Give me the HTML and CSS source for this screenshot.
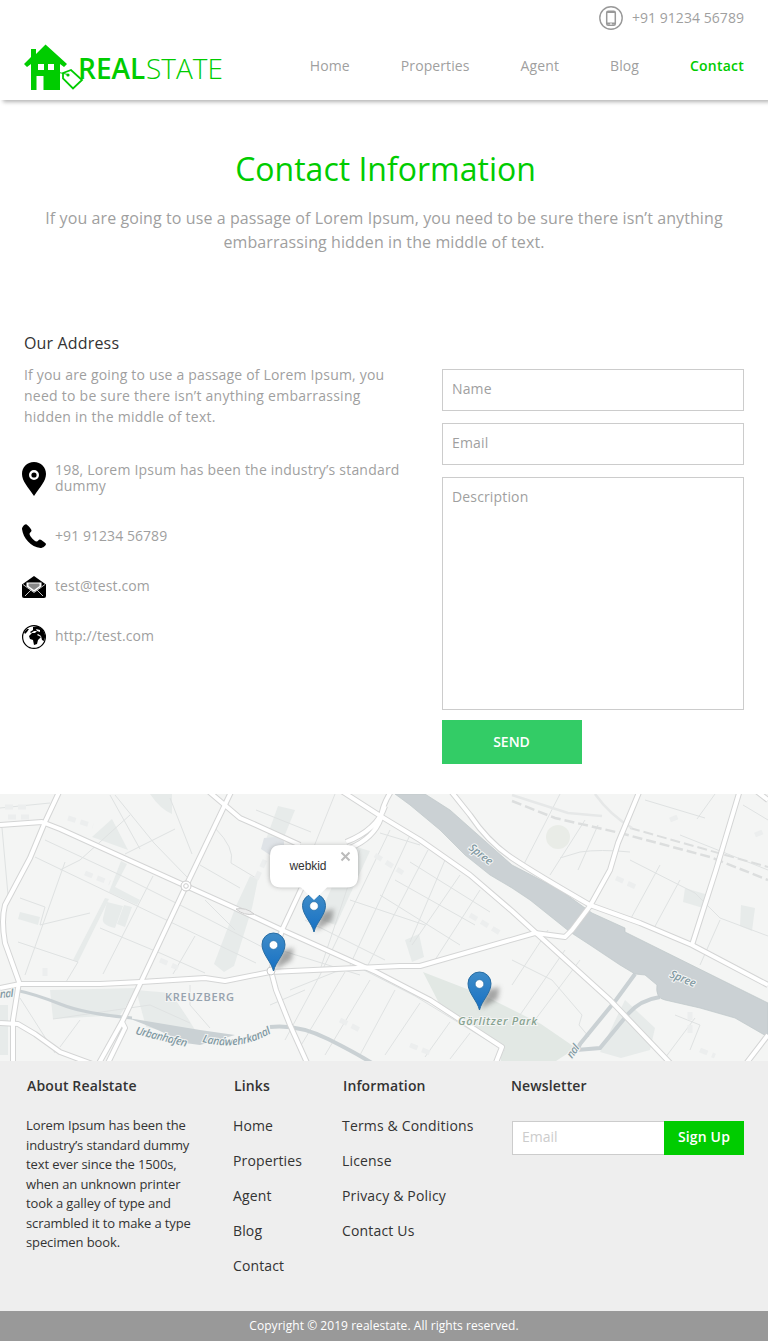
FILE: index.html
```html
<!DOCTYPE html>
<html lang="en">
<head>
<meta charset="utf-8">
<title>Contact - Realstate</title>
<link rel="stylesheet" href="styles.css">
</head>
<body>
<header class="header">
  <div class="topbar">
    <svg class="phone-icon" viewBox="0 0 24 24"><circle cx="12" cy="12" r="11.2" fill="none" stroke="#999" stroke-width="1.4"/><rect x="7.7" y="5.2" width="8.6" height="14" rx="1.5" fill="none" stroke="#999" stroke-width="1.5"/><path d="M8 6h8M8 17.5h8" stroke="#999" stroke-width="2"/><path d="M11 18h2" stroke="#fff"/></svg>
    <span class="phone">+91 91234 56789</span>
  </div>
  <div class="navbar">
    <a class="logo">
      <svg class="logo-icon" viewBox="0 0 60 48"><path fill="#0c0" fill-rule="evenodd" d="M7 5h5v5L21.500 .5 43 20l-3 3-4-3v26H19.500V32H12.500v14H7V20l-4 3-3-3 7-7zM14 20v6h6v-6zM24 20v6h6v-6z"/><path d="M39 29l8-3 11 10-9 8.500-10-10z" fill="#fff" stroke="#0c0" stroke-width="1.800"/><path d="M35 28.500l9 2" stroke="#0c0" fill="none"/><circle cx="44" cy="31" r="1.600" fill="#0c0"/></svg>
      <span class="logo-real">REAL</span><span class="logo-state">STATE</span>
    </a>
    <nav class="nav"><a>Home</a><a>Properties</a><a>Agent</a><a>Blog</a><a class="active">Contact</a></nav>
  </div>
</header>

<section class="intro">
  <h1>Contact Information</h1>
  <p>If you are going to use a passage of Lorem Ipsum, you need to be sure there isn’t anything<br>embarrassing hidden in the middle of text.</p>
</section>

<main class="contact">
  <section class="address">
    <h2>Our Address</h2>
    <p class="lead">If you are going to use a passage of Lorem Ipsum, you<br><span class="wide">need to be sure there isn’t anything embarrassing</span><br><span class="wide">hidden in the middle of text.</span></p>
    <ul class="details">
      <li class="place"><svg viewBox="0 0 24 34" height="34"><path fill-rule="evenodd" d="M12 0C5 0 0 5 0 12c0 7 6 13 12 22 6-9 12-15 12-22C24 5 19 0 12 0zm0 8a5 5 0 1 1 0 10 5 5 0 0 1 0-10z"/><circle cx="12" cy="13" r="2.600"/></svg><span>198, Lorem Ipsum has been the industry’s standard<br>dummy</span></li>
      <li><svg viewBox="0 0 24 24" height="24"><path d="M4 .2C2.500 0 0 3 0 5c1 9 9 18 18.500 19 2.500 0 5.500-2.500 5.500-4 0-1-5-4.500-6-4.500-1.500 0-2 2-3.500 2C12 17 8 12.500 7.500 10c0-1.500 2-2 2-3.500C9.500 5 5.500.5 4 .2z"/></svg><span class="tel">+91 91234 56789</span></li>
      <li><svg viewBox="0 0 24 24" height="24"><g transform="translate(0 1)"><path d="M0 9.500L12 1l12 8.500V21q0 2-2 2H2q-2 0-2-2z"/><path d="M4.500 7.500h15v4L12 17 4.500 11.500z" fill="#fff"/><path d="M6.500 8.500h11v2.500L12 15l-5.500-4z" fill="#888"/><path d="M3 21l6-6M21 21l-6-6M1 9.500l11 8 11-8" fill="none" stroke="#ddd" stroke-width=".9"/></g></svg><span>test@test.com</span></li>
      <li><svg viewBox="0 -1 24 24" height="24" overflow="visible"><circle cx="12" cy="12" r="11.400" fill="#fff" stroke="#000" stroke-width="1.200"/><path d="M11 2l5-1 5 4 2.400 6-1.400 5-2-1-1-4-3-2-1 1 4 2-3 3-1 4-3 1-1-5-3-1-1-3 3-3 3 0 2-2-3 0-3 2-1-1 3-2zM2 7l3-3 2 0-2 3-2 2z"/><path d="M14 4l4 1 0 2-3-1z" fill="#fff"/></svg><span>http://test.com</span></li>
    </ul>
  </section>
  <form class="form">
    <div class="field">Name</div>
    <div class="field">Email</div>
    <div class="field field-area">Description</div>
    <button class="send" type="button">SEND</button>
  </form>
</main>

<section class="map">
  <svg viewBox="0 794 768 267" width="768" height="267">
    <defs>
      <linearGradient id="blue" x1="0" y1="0" x2="0" y2="1"><stop offset="0" stop-color="#3f8cc8"/><stop offset="1" stop-color="#1670c4"/></linearGradient>
      <filter id="soft" x="-50%" y="-50%" width="200%" height="200%"><feGaussianBlur stdDeviation="2.500"/></filter>
      <g id="pin">
        <path d="M1-1L8-20 20-23 18-11z" fill="#555" opacity=".5" filter="url(#soft)"/>
        <path d="M0 0C-2-9-11.500-17-11.500-26.500a11.500 11.500 0 0 1 23 0C11.500-17 2-9 0 0z" fill="url(#blue)" stroke="#286da3"/>
        <circle cy="-26" r="4.300" fill="#fff" stroke="#286da3" stroke-width=".6"/>
      </g>
      <g id="roads" fill="none" stroke-linejoin="round">
        <path d="M60 790L45 822 30 858 5 905Q1 920 5 943L19 982 13 1020V1065"/>
        <path d="M0 825L42 822 60 829 186 886 235 908 282 930 358 964 376 972 430 1000 502 1047 495 1065"/>
        <path d="M232 790L186 886 141 982 122 1022 98 1065M122 1022l3 6-18 37"/>
        <path d="M0 988L20 984H100L141 982 205 978 225 981 270 972 400 966 420 966 535 933 565 937 572 930 590 906 610 870 618 843 640 790"/>
        <path d="M207 790L240 818 256 825 300 845"/>
        <path d="M340 790L382 817 420 840 470 875 512 911 535 932 610 1000 672 1065"/>
        <path d="M392 790Q382 805 381 818 374 838 350 848M385 806Q377 830 346 842M310 870L282 930 271 971 276 990 290 1025 308 1065"/>
        <path d="M450 790L470 815Q488 842 512 858T590 905L640 923 692 945 768 985"/>
        <path d="M740 790L716 870 692 945M0 1023L18 1024 35 1034 60 1052 95 1065M768 1035L745 1065M755 790L768 800"/>
      </g>
    </defs>
    <rect y="794" width="768" height="267" fill="#f4f5f4"/>
    <g fill="#e7ebea">
      <path d="M112 819L128 850 92 837z"/><path d="M121 861l6 3-12 23 25 13-3 5-28-13z"/><path d="M109 899L78 962l-5-2 32-62z"/><path d="M20 912l20 5-2 8-20-6z"/><path d="M107 902l16 4-8 22q-14-3-12-10zM124 905l8 2-7 20-8-3z"/><path d="M50 990L138 988 120 1015 53 1019z"/><path d="M136 990l35 3 18 27 12 20-55-13z"/>
      <path d="M250 876l8 3-6 29-18 58-10 6-10-8 22-58z"/><path d="M350 845l20 6-34 74-18-6z"/><path d="M405 940l14-6 5 23-12 5z"/><path d="M278 806l17 4-17 42-14-7z"/><path d="M150 794h22v20q-12-5-22-20z"/><path d="M685 888l20 6-2 14-20-6z"/><path d="M741 905l14 3-3 23-12-5z"/><path d="M625 1000l30 28-5 22-29 8-21-6z"/><path d="M0 1005h8v50H0z"/>
    </g>
    <path d="M264 838l12-1 8 4v12l-14 2-9-6z" fill="#dfe3e7"/>
    <path d="M423 972l62 24 56 28 35 24-20 13h-55l-2-17-57-35z" fill="#e2e8e4"/>
    <circle cx="558" cy="837" r="12" fill="#e9ece7"/>
    <g fill="none" stroke="#dfe2e2">
      <path d="M0 808L50 803M2 828L8 895M45 840L120 875 210 920 268 950M35 857L135 905 256 963M60 870l20-10 50-45M65 862L25 975M20 898l25 9-5 18 50-12M18 942l60 20-15 25M153 876l-50 98M100 928l60 25 45 20M195 936l-22 38M110 795l30 54M115 795l39 48 33 34M125 854l50-25M170 798l22 56M215 828q20 20 16 35l25 15M200 865l40 23M205 900l30 30"/>
      <path d="M53 1019L150 1005 190 1023M80 1020l-20 27M20 998l35 55M190 985v20l20 23M335 794l-32 80M256 810l55 22M360 850l-40 120M390 830l-70 145M410 835l-60 130M428 850l-60 115M445 860l-35 82M460 875l-48 70M480 890l-45 70M420 845l-40-12M410 862l80 50M395 880l80 45M380 895l80 50M350 900l75 25M305 920l80 40M280 950l80 25"/>
      <path d="M290 990l45-18 25-4 55 28 90 55M270 1005l35-15M320 975l-35 65M345 972l-45 75M370 980l-45 75M395 990l-35 65M420 1003l-35 52M450 1022l-25 35M470 1033l-20 26M512 960l40 20 30 35-3 10 10 12M548 930l-36 55M565 950l-45 65M580 960l-45 60"/>
      <path d="M560 794l-36 70M585 820l-35 55M598 825l-20 45M560 858l20-6q20-3 50 0M630 860l65 33 25 25 48 18M660 865l-30 55M680 880l-27 50M720 920l-20 45M645 800l60 18M680 835l88 35M715 794l-18 25M768 820l-25-15M590 1030l-18 30M675 1015l25 10-10 25M695 1018l-30 40"/>
    </g>
    <g fill="none" stroke="#eceeee" stroke-width="5" stroke-dasharray="8 5">
      <path d="M5 807h25M8 817h22M68 818l25 8M85 873l25 10M45 968v12M265 860l-10 22M375 855l28 18M470 915l30 18M160 960l18 8M616 878l22 10M670 820l10-4M340 1020l20 10M410 1045l20 8M700 1050l15 6M755 835l10-4M690 1012v24"/>
    </g>
    <g fill="none" stroke="#dcdede" stroke-width="2.500" stroke-dasharray="10 4"><path d="M512 801L555 818 620 833 710 857 768 880"/><path d="M630 828L690 845 768 867" stroke-width="2"/><path d="M512 795L568 813 602 816M595 794Q610 815 632 828" stroke="#e6e8e8" stroke-dasharray="none"/></g>
    <g fill="none" stroke="#cad1d4">
      <path d="M15 990Q35 994 60 1004T132 1018" stroke-width="3"/><path d="M270 1027Q298 1024 328 1039T375 1065" stroke-width="4"/>
      <path d="M635 974L616 1000 580 1044 577 1050 600 1048 628 1014Q640 1000 660 997" stroke-width="4"/>
    </g>
    <path d="M128 1018L200 1030V1045L185 1043Q160 1030 128 1018zM200 1030L235 1035 200 1045z" fill="#cad1d4"/>
    <path d="M395 794H425L450 810 512 865 560 890 592 913 625 928V932L768 1003V1037L735 1018 700 1008 665 1000Q655 998 657 985L645 975 635 974 620 965 590 945 570 932 530 900 512 888 490 875 465 855 440 830 410 805z" fill="#cbd1d4" stroke="#bec7c9" stroke-width=".7"/>
    <use href="#roads" stroke="#d4d5d5" stroke-width="6"/>
    <use href="#roads" stroke="#fff" stroke-width="4"/>
    <circle cx="186" cy="886" r="5" fill="#fff" stroke="#ccc"/><circle cx="186" cy="886" r="2.300" fill="#fff" stroke="#ccc"/>
    <circle cx="271" cy="971" r="4" fill="#fff" stroke="#ccc"/><path d="M236 909q10-2 18 5-10 2-18-5z" fill="#eee" stroke="#ccc"/>
    <g class="map-label">
      <text x="165" y="1001" class="district" textLength="69">KREUZBERG</text>
      <text transform="translate(135 1034) rotate(14)" textLength="53">Urbanhafen</text>
      <path id="canal-name" d="M202 1042Q240 1052 273 1032" fill="none" stroke="none"/><text><textPath href="#canal-name" textLength="72">Landwehrkanal</textPath></text>
      <text transform="translate(468 849) rotate(38)" textLength="27">Spree</text>
      <text transform="translate(669 977) rotate(22)" textLength="27">Spree</text>
      <text x="0" y="998" transform="rotate(-5 0 999)" textLength="14">nal</text>
      <text transform="translate(572 1059) rotate(-55)" textLength="14">nal</text>
      <text x="458" y="1025" class="park" textLength="79">Görlitzer Park</text>
    </g>
    <use href="#pin" x="314" y="932"/><use href="#pin" x="273.500" y="971"/><use href="#pin" x="479.500" y="1010"/>
    <path d="M281 846h66q11 0 11 11v19q0 11-11 11H281q-11 0-11-11v-19q0-11 11-11z" fill="#666" opacity=".55" filter="url(#soft)"/>
    <path d="M281 845h66q11 0 11 11v20.500q0 11-11 11H327L314 900 301 887.500H281q-11 0-11-11V856q0-11 11-11z" fill="#fff"/>
    <text x="289.500" y="870" class="popup-text" textLength="37">webkid</text>
    <path d="M341.500 852.500l8 8m0-8l-8 8" stroke="#bbb" stroke-width="2"/>
  </svg>
</section>

<footer class="footer">
  <section class="about"><h3>About Realstate</h3><p>Lorem Ipsum has been the<br>industry’s standard dummy<br>text ever since the 1500s,<br>when an unknown printer<br>took a galley of type and<br>scrambled it to make a type<br>specimen book.</p></section>
  <section class="links"><h3>Links</h3><a>Home</a><a>Properties</a><a>Agent</a><a>Blog</a><a>Contact</a></section>
  <section class="links info"><h3>Information</h3><a>Terms &amp; Conditions</a><a>License</a><a>Privacy &amp; Policy</a><a>Contact Us</a></section>
  <section class="newsletter"><h3>Newsletter</h3><div class="signup"><div class="signup-field">Email</div><button type="button">Sign Up</button></div></section>
</footer>
<div class="copyright">Copyright © 2019 realestate. All rights reserved.</div>
</body>
</html>
```
FILE: styles.css
```css
* { box-sizing: border-box; margin: 0; padding: 0; }
body { width: 768px; font: 14px/20px "Open Sans", "Noto Sans", sans-serif; color: #9f9f9f; background: #fff; }
h1, h2, h3 { font-weight: 400; }

.header { height: 100px; padding: 6px 24px 0; box-shadow: 3px 2px 4px rgba(0, 0, 0, .3); }
.topbar { display: flex; justify-content: flex-end; align-items: center; gap: 9px; height: 24px; letter-spacing: .05px; }
.phone-icon { width: 24px; height: 24px; }
.navbar { display: flex; justify-content: space-between; margin-top: 14px; }
.logo { display: flex; height: 48px; color: #0c0; font-size: 28px; line-height: 49px; }
.logo-icon { width: 60px; height: 48px; margin-right: -6px; }
.logo-real { font-weight: 600; width: 68px; }
.logo-state { font-weight: 300; }
.nav { display: flex; gap: 51px; padding-top: 12px; letter-spacing: .1px; }
.nav .active { color: #0c0; font-weight: 600; letter-spacing: .22px; }

.intro { padding-top: 47px; text-align: center; height: 233px; }
.intro h1 { color: #0c0; font-size: 32px; line-height: 44px; padding-left: 3px; }
.intro p { margin-top: 15px; font-size: 16px; line-height: 24px; letter-spacing: .09px; }

.contact { display: flex; justify-content: space-between; height: 461px; padding: 0 24px; }
.address h2 { font-size: 16px; line-height: 20px; color: #333; letter-spacing: .16px; }
.lead { margin-top: 11px; line-height: 21px; letter-spacing: .18px; }
.lead .wide { letter-spacing: .25px; }
.details { list-style: none; margin: 30px 0 0 -2px; letter-spacing: .12px; }
.details li { display: flex; align-items: center; gap: 9px; height: 24px; margin-bottom: 26px; }
.details svg { width: 24px; flex: none; }
.details .place { height: 43px; margin-bottom: 24px; line-height: 16px; letter-spacing: .2px; }
.details .place span { margin-top: -1px; }
.details .tel { letter-spacing: .06px; }
.form { width: 302px; padding-top: 36px; }
.field { height: 42px; margin-bottom: 12px; padding: 9px; border: 1px solid #ccc; letter-spacing: .15px; }
.field-area { height: 233px; margin-bottom: 10px; }
.send { display: block; width: 140px; height: 44px; padding: 0 1px 2px 0; border: 0; background: #3c6; color: #fff; font: 600 14px "Open Sans", "Noto Sans", sans-serif; }

.map, .map svg { display: block; height: 267px; }
.details svg { display: block; }
.map-label { font: italic 600 11px "Open Sans", sans-serif; fill: #829aa3; stroke: #f4f5f4; stroke-width: 2px; paint-order: stroke; }
.map-label .district { font-style: normal; fill: #96a2ae; }
.map-label .park { fill: #88a391; }
.popup-text { font: 12px "Liberation Sans", Arial, sans-serif; fill: #333; }

.footer { display: grid; grid-template-columns: 207px 109px 170px 232px; padding: 15px 24px 0 26px; height: 250px; background: #eee; color: #333; }
.footer h3 { font-size: 14px; line-height: 20px; font-weight: 600; padding-left: 1px; letter-spacing: .13px; }
.about p { margin-top: 20px; font-size: 13px; line-height: 19.5px; letter-spacing: -.11px; }
.links a { display: block; height: 35px; letter-spacing: .13px; }
.links.info a { letter-spacing: .17px; }
.links h3 { margin-bottom: 20px; }
.newsletter .signup { margin-top: 25px; }
.newsletter h3 { padding: 0; margin-left: -1px; }
.signup { display: flex; }
.signup-field { flex: 1; height: 34px; padding: 5px 9px; border: 1px solid #ccc; border-right: 0; background: #fff; color: #ccc; }
.signup button { width: 80px; padding-bottom: 3px; border: 0; background: #0c0; color: #fff; font: 600 14px "Open Sans", "Noto Sans", sans-serif; letter-spacing: .15px; }
.copyright { height: 30px; background: #999; color: #fff; text-align: center; font-size: 12px; line-height: 30px; letter-spacing: .05px; }
```
